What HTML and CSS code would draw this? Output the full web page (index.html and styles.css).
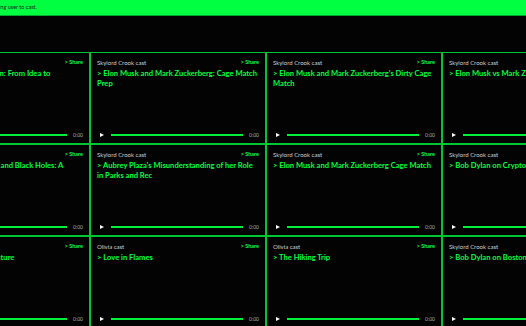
FILE: index.html
```html
<!DOCTYPE html>
<html lang="en">
<head>
    <meta charset="UTF-8">
    <meta name="viewport" content="width=device-width, initial-scale=1.0">
    <title>Casts</title>
    <link rel="stylesheet" href="styles.css">
</head>
<body>
    <div class="page">
        <div class="topbar">
            <p>Select a casting user to cast.</p>
        </div>

        <div class="grid">
            <!-- row 1 -->
            <div class="cast">
                <div class="cast-head"><span class="author">Skylord Crook cast</span><a class="share">&gt; Share</a></div>
                <h2 class="title">&gt; Building a Startup Plan: From Idea to Implementation</h2>
                <div class="player"><span class="play"></span><span class="bar"></span><span class="time">0:00</span></div>
            </div>
            <div class="cast">
                <div class="cast-head"><span class="author">Skylord Crook cast</span><a class="share">&gt; Share</a></div>
                <h2 class="title">&gt; Elon Musk and Mark Zuckerberg: Cage Match Prep</h2>
                <div class="player"><span class="play"></span><span class="bar"></span><span class="time">0:00</span></div>
            </div>
            <div class="cast">
                <div class="cast-head"><span class="author">Skylord Crook cast</span><a class="share">&gt; Share</a></div>
                <h2 class="title">&gt; Elon Musk and Mark Zuckerberg's Dirty Cage Match</h2>
                <div class="player"><span class="play"></span><span class="bar"></span><span class="time">0:00</span></div>
            </div>
            <div class="cast">
                <div class="cast-head"><span class="author">Skylord Crook cast</span><a class="share">&gt; Share</a></div>
                <h2 class="title">&gt; Elon Musk vs Mark Zuckerberg: The Match</h2>
                <div class="player"><span class="play"></span><span class="bar"></span><span class="time">0:00</span></div>
            </div>

            <!-- row 2 -->
            <div class="cast">
                <div class="cast-head"><span class="author">Skylord Crook cast</span><a class="share">&gt; Share</a></div>
                <h2 class="title">&gt; Dr. Stephen Hawking and Black Holes: A Journey</h2>
                <div class="player"><span class="play"></span><span class="bar"></span><span class="time">0:00</span></div>
            </div>
            <div class="cast">
                <div class="cast-head"><span class="author">Skylord Crook cast</span><a class="share">&gt; Share</a></div>
                <h2 class="title">&gt; Aubrey Plaza's Misunderstanding of her Role in Parks and Rec</h2>
                <div class="player"><span class="play"></span><span class="bar"></span><span class="time">0:00</span></div>
            </div>
            <div class="cast">
                <div class="cast-head"><span class="author">Skylord Crook cast</span><a class="share">&gt; Share</a></div>
                <h2 class="title">&gt; Elon Musk and Mark Zuckerberg Cage Match</h2>
                <div class="player"><span class="play"></span><span class="bar"></span><span class="time">0:00</span></div>
            </div>
            <div class="cast">
                <div class="cast-head"><span class="author">Skylord Crook cast</span><a class="share">&gt; Share</a></div>
                <h2 class="title">&gt; Bob Dylan on Cryptocurrency</h2>
                <div class="player"><span class="play"></span><span class="bar"></span><span class="time">0:00</span></div>
            </div>

            <!-- row 3 -->
            <div class="cast">
                <div class="cast-head"><span class="author">Olivia cast</span><a class="share">&gt; Share</a></div>
                <h2 class="title">&gt; The Marvelous Adventure</h2>
                <div class="player"><span class="play"></span><span class="bar"></span><span class="time">0:00</span></div>
            </div>
            <div class="cast">
                <div class="cast-head"><span class="author">Olivia cast</span><a class="share">&gt; Share</a></div>
                <h2 class="title">&gt; Love in Flames</h2>
                <div class="player"><span class="play"></span><span class="bar"></span><span class="time">0:00</span></div>
            </div>
            <div class="cast">
                <div class="cast-head"><span class="author">Olivia cast</span><a class="share">&gt; Share</a></div>
                <h2 class="title">&gt; The Hiking Trip</h2>
                <div class="player"><span class="play"></span><span class="bar"></span><span class="time">0:00</span></div>
            </div>
            <div class="cast">
                <div class="cast-head"><span class="author">Skylord Crook cast</span><a class="share">&gt; Share</a></div>
                <h2 class="title">&gt; Bob Dylan on Boston</h2>
                <div class="player"><span class="play"></span><span class="bar"></span><span class="time">0:00</span></div>
            </div>
        </div>
    </div>
</body>
</html>
```

FILE: styles.css
```css
* {
    margin: 0;
    padding: 0;
    box-sizing: border-box;
    font-family: 'Lato', 'Noto Sans', sans-serif;
}

html, body {
    overflow: hidden;
    background-color: #030303;
}

/* the page is scrolled sideways in the shot */
.page {
    width: 800px;
    margin-left: -86px;
}

.topbar {
    height: 16px;
    background-color: #00ff41;
    border-bottom: 1px solid #00a82b;
    padding-left: 55px;
}

.topbar p {
    font-size: 5.5px;
    line-height: 15px;
    color: #1b1b1b;
}

.grid {
    display: grid;
    grid-template-columns: repeat(4, 176px);
    grid-auto-rows: 92px;
    margin-top: 36px;
}

.cast {
    display: flex;
    flex-direction: column;
    border: 1px solid #00c532;
    padding: 5px 6px 5px 6px;
}

.cast-head {
    display: flex;
    justify-content: space-between;
    align-items: center;
    height: 8px;
}

.author {
    font-size: 6px;
    color: #d0d0d0;
}

.share {
    font-size: 5.5px;
    font-weight: bold;
    color: #00ff41;
}

.title {
    margin-top: 1.5px;
    font-size: 7.6px;
    line-height: 10px;
    font-weight: bold;
    color: #00ff41;
}

.player {
    margin-top: auto;
    display: flex;
    align-items: center;
    height: 6px;
}

.play {
    width: 0;
    height: 0;
    margin-left: 3px;
    border-top: 2.5px solid transparent;
    border-bottom: 2.5px solid transparent;
    border-left: 4px solid #fff;
}

.bar {
    flex: 1;
    height: 1.5px;
    margin: 0 6px 0 7px;
    background-color: #00f03c;
}

.time {
    font-size: 5px;
    color: #aaa;
}
```
